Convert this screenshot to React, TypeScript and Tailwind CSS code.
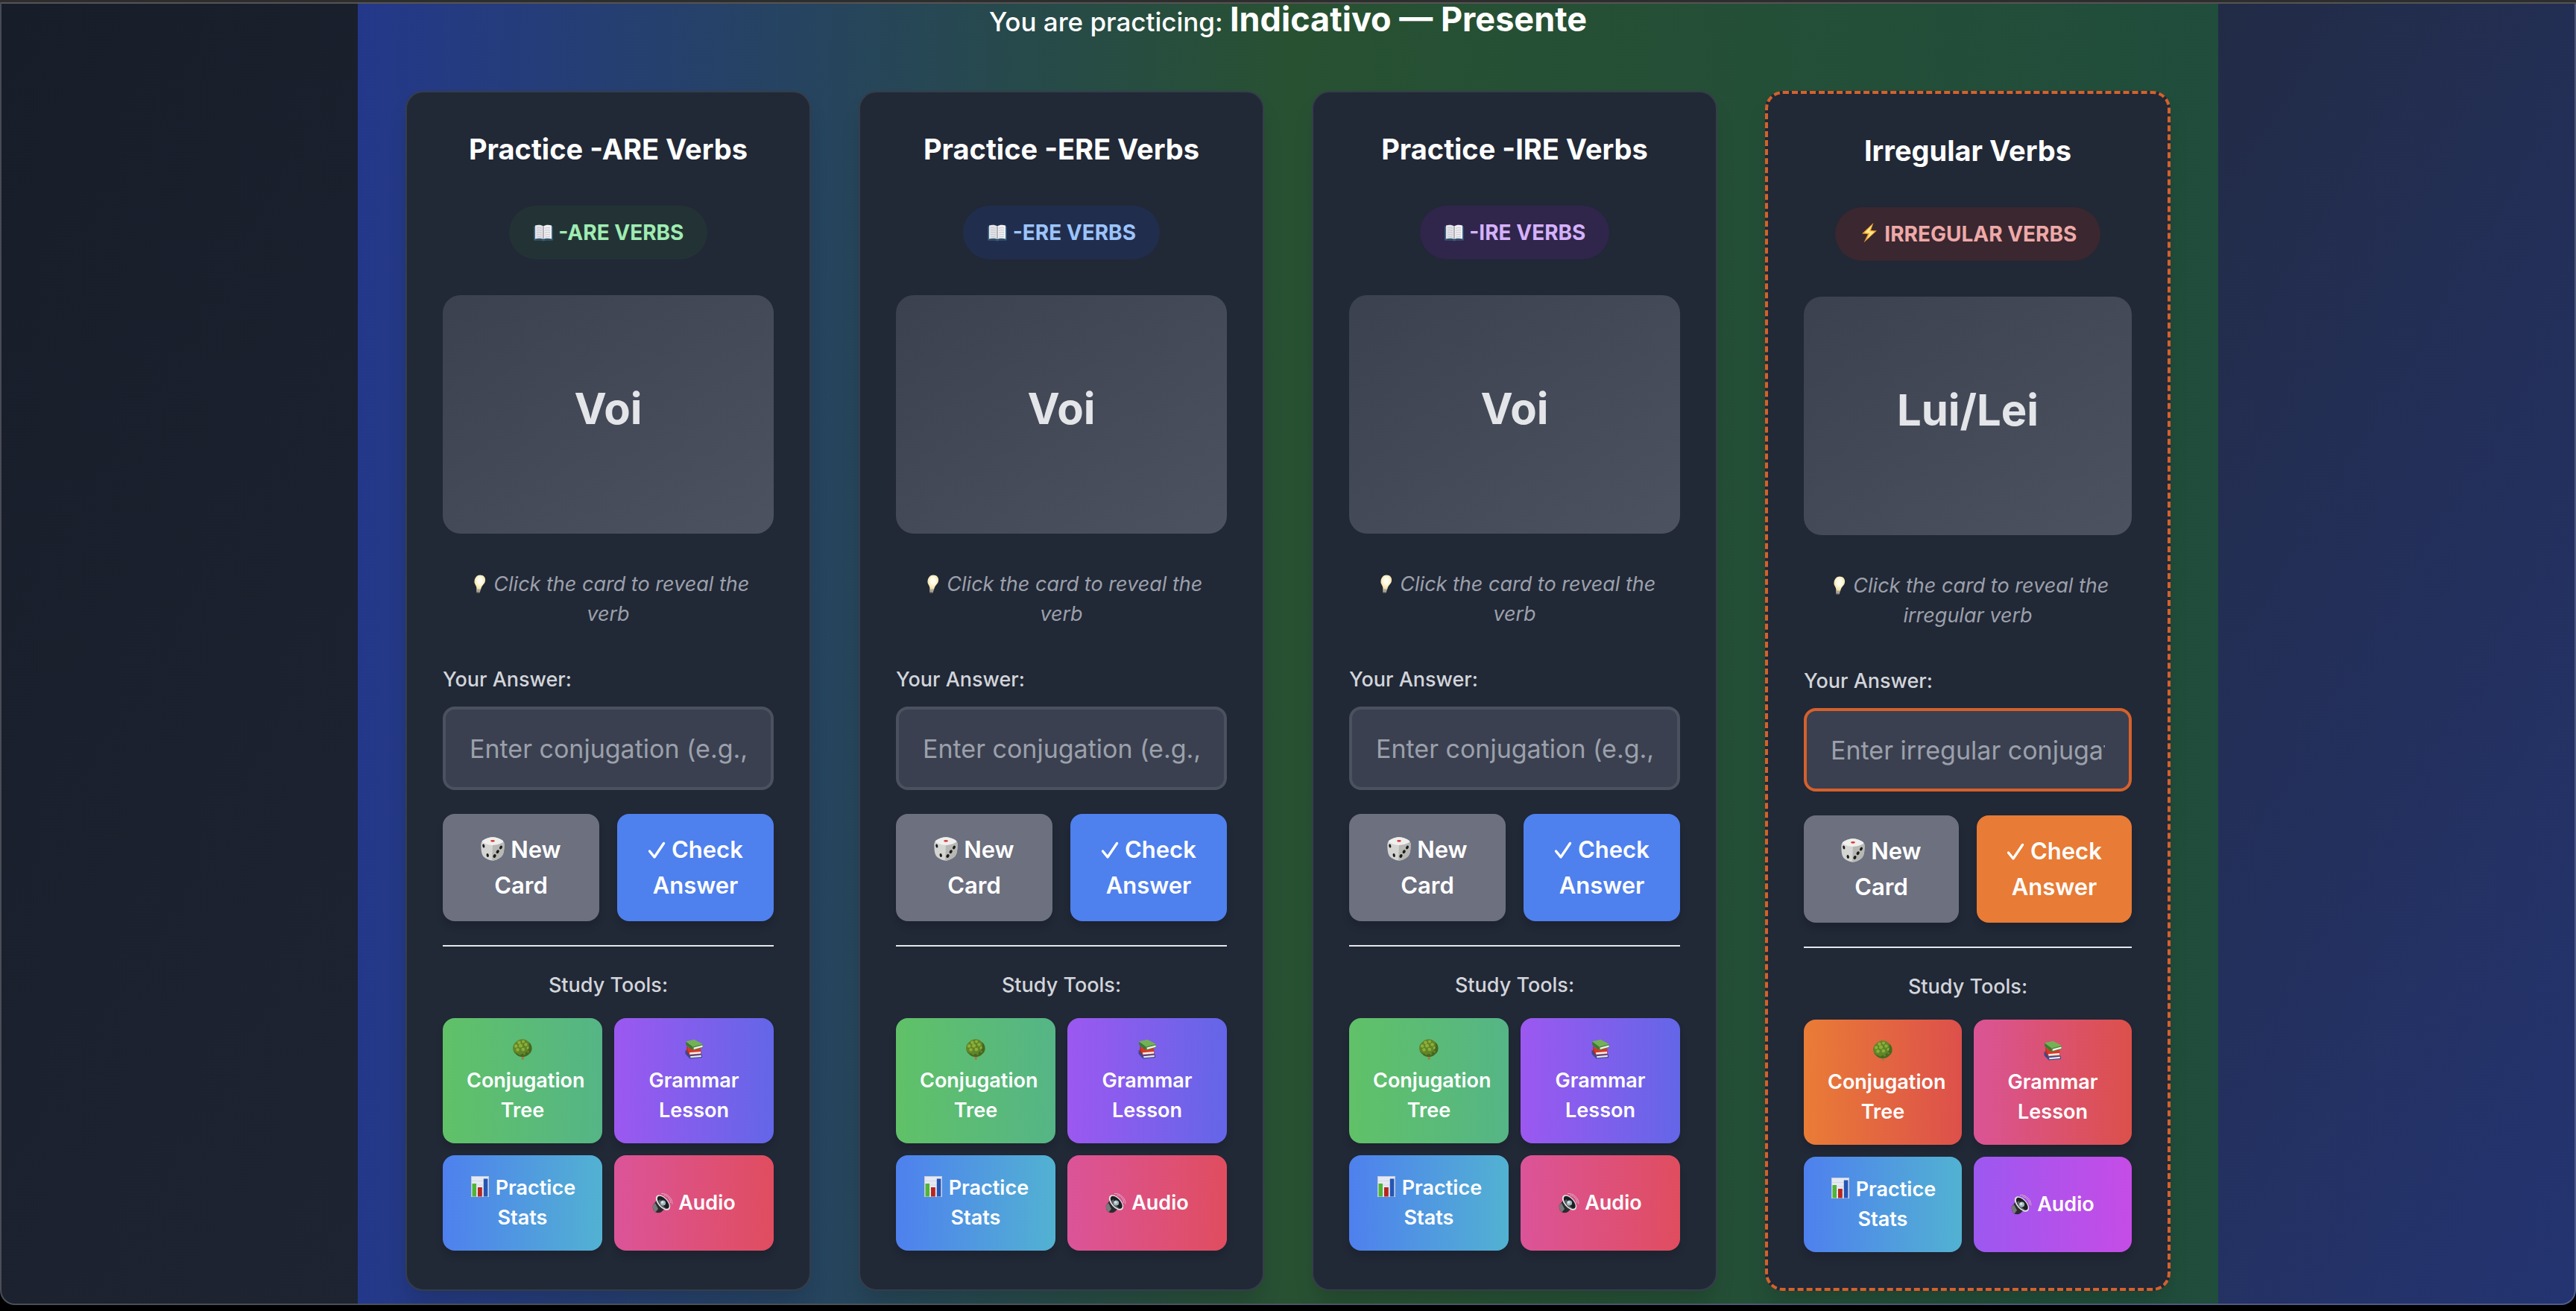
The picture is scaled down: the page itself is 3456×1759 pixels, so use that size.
import type { ReactNode } from 'react';

type IconProps = { className?: string };

function BookIcon({ className = '' }: IconProps) {
  return (
    <svg viewBox="0 0 28 28" aria-hidden="true" className={`inline-block size-7 ${className}`}>
      <path d="M1.5 5.5h25v19h-10l-2.500 1-2.500-1h-10z" fill="#3f6f8f" />
      <path d="M2.500 22.500h23v1.200h-9.500l-2 .8-2-.8h-9.500z" fill="#2a4257" />
      <path d="M3 4.500c4-1.200 8-1 11 1v17.500c-3-1.500-7-1.500-11-.5z" fill="#e3e3e8" />
      <path d="M25 4.500c-4-1.200-8-1-11 1v17.500c3-1.500 7-1.500 11-.5z" fill="#f0f0f4" />
      <path d="M14 5.500v17.500" stroke="#8d8d96" strokeWidth="1.200" />
      <path
        d="M5 8c2.500-.6 5-.5 7 .4M5 11c2.500-.6 5-.5 7 .4M5 14c2.500-.6 5-.5 7 .4M5 17c2.500-.6 5-.5 7 .4M5 20c2.500-.6 5-.5 7 .4M23 8c-2.500-.6-5-.5-7 .4M23 11c-2.500-.6-5-.5-7 .4M23 14c-2.500-.6-5-.5-7 .4M23 17c-2.500-.6-5-.5-7 .4M23 20c-2.500-.6-5-.5-7 .4"
        stroke="#b9b9c2"
        strokeWidth=".8"
        fill="none"
      />
    </svg>
  );
}

function BoltIcon({ className = '' }: IconProps) {
  return (
    <svg viewBox="0 0 28 28" aria-hidden="true" className={`inline-block size-7 ${className}`}>
      <path d="M19.500 1 4 15.500l8 .5L6.500 27.500 24 11.500l-8-.5z" fill="#f0a32f" />
      <path d="M17.500 4 7.500 14.300l7 .4-4 8.300L21 12.700l-7-.4z" fill="#ffe98a" />
    </svg>
  );
}

function BulbIcon({ className = '' }: IconProps) {
  return (
    <svg viewBox="0 0 28 28" aria-hidden="true" className={`inline-block size-7 ${className}`}>
      <defs>
        <radialGradient id="bulbGlow" cx=".5" cy=".4" r=".6">
          <stop offset=".3" stopColor="#fffdf0" />
          <stop offset="1" stopColor="#f1dc8e" />
        </radialGradient>
      </defs>
      <path
        d="M17 1.500c5 0 7.800 3.500 7 8-.6 3.800-3.500 5-5 8.500-.6 1.500-.8 2.500-1.200 3.500h-5.500c.3-1 .2-2-.1-3.500-.8-3.500-3.200-4.700-2.700-8.500.6-4.500 3.500-8 7.500-8z"
        fill="url(#bulbGlow)"
      />
      <path d="M12.200 20.500h5.800l-1.200 4.500c-1.500 1.300-3.500 1.300-4.500 0z" fill="#a8a59c" />
      <path d="M12.500 24.500h4l-1.500 1.800h-2z" fill="#4f4b42" />
    </svg>
  );
}

function DiceIcon({ className = '' }: IconProps) {
  return (
    <svg viewBox="0 0 32 32" aria-hidden="true" className={`inline-block size-8 ${className}`}>
      <path d="M2 5.500C6 2 12 .3 16 .3S26 2 30 5.500c2 2 1.600 5 1.500 8-.2 5-.8 9.500-3 12C25.500 29 19 31.700 16 31.700S5.500 29 3 25.500C1 22.500.500 18 .4 13.500c0-3-.4-6 1.600-8z" fill="#d4d4d2" />
      <path d="M2 5C6 2 12 .3 16 .3S26 2 30 5c.8 1.200-1 2.700-3 3.600-3 1.400-7.500 2.400-11 2.400S8 10 5 8.600C3 7.700 1.200 6.200 2 5z" fill="#efefed" />
      <path d="M16 11c4 0 9-1.200 12-2.800 2-1 3.500-1.700 3.600.8.2 5-.2 13-3.100 16.500C25.500 29 19 31.700 15 31.700z" fill="#b7b7b4" />
      <ellipse cx="16" cy="5.300" rx="2.900" ry="1.400" fill="#d93a36" />
      <ellipse cx="3.800" cy="12" rx="1.500" ry="2.500" fill="#1b1b1b" transform="rotate(-12 3.800 12)" />
      <ellipse cx="9.200" cy="24.500" rx="1.600" ry="2.600" fill="#1b1b1b" transform="rotate(-12 9.200 24.500)" />
      <ellipse cx="27" cy="14" rx="1.800" ry="2.600" fill="#1b1b1b" transform="rotate(28 27 14)" />
      <ellipse cx="22.700" cy="19.700" rx="1.900" ry="2.600" fill="#1b1b1b" transform="rotate(28 22.700 19.700)" />
      <ellipse cx="18.500" cy="25.500" rx="1.900" ry="2.600" fill="#1b1b1b" transform="rotate(28 18.500 25.500)" />
    </svg>
  );
}

function CheckIcon({ className = '' }: IconProps) {
  return (
    <svg viewBox="0 0 24 24" aria-hidden="true" className={`inline-block size-6 ${className}`}>
      <path d="M2.500 13 9 21 21.500 2.500" fill="none" stroke="#fff" strokeWidth="3.400" strokeLinecap="round" strokeLinejoin="round" />
    </svg>
  );
}

function TreeIcon({ className = '' }: IconProps) {
  return (
    <svg viewBox="0 0 28 28" aria-hidden="true" className={`inline-block size-7 ${className}`}>
      <path d="M12.500 22h3.500l-.4 5.800h-2.600z" fill="#a9793c" />
      <path d="M14 .3c3 0 5 1 7 2.700 3 2 5.500 5 5.500 9.500 0 3-1 5.500-3.500 7.500-2.200 2.500-5.500 4-9 4s-6.800-1.300-9-3.800C2.500 18.200 1 15.500 1 12.500c0-4 2-7 5-9C8.500 1.300 11 .3 14 .3z" fill="#5f8628" />
      <g fill="#8fae38">
        <circle cx="9.500" cy="4.800" r="2.200" />
        <circle cx="15" cy="3.400" r="2" />
        <circle cx="5.200" cy="9.500" r="2.200" />
        <circle cx="11.500" cy="9" r="2.500" />
        <circle cx="18.500" cy="7.500" r="2.200" />
        <circle cx="7.500" cy="14.500" r="2.200" />
        <circle cx="14.800" cy="14" r="2.300" />
        <circle cx="21.500" cy="12" r="1.900" />
      </g>
      <path d="M22.500 4.300c2.800 2.400 4 5 4 8.200 0 3-1 5.500-3.500 7.500-2.200 2.500-5.500 4-9 4-4 0-7-1.500-9-4-1.300-1-2.300-2-3-3.500 4 4 9 4.800 13.500 3 5.500-2 8.500-8 7-15.200z" fill="#35531b" opacity=".6" />
      <g fill="#64862c">
        <circle cx="10.500" cy="20" r="1.600" />
        <circle cx="16.500" cy="20" r="1.600" />
        <circle cx="21.500" cy="17" r="1.500" />
      </g>
    </svg>
  );
}

function BooksIcon({ className = '' }: IconProps) {
  return (
    <svg viewBox="0 0 28 28" aria-hidden="true" className={`inline-block size-7 ${className}`}>
      <path d="M2.500 14.500 8 19.500v6.500L2.500 20z" fill="#3a4a8c" />
      <path d="M6 21.500 23.500 20l1.500 1.500v3.500L8.500 26.500z" fill="#3b4c91" />
      <path d="M9 23.200 23.800 21.800v2.200L9.500 25.300z" fill="#ececec" />
      <path d="M4.500 9.500 8 14v7.500l-4-5z" fill="#b52a20" />
      <path d="M5 12 21.500 11l2 3v6.500L8 21.500z" fill="#d63a2a" />
      <path d="M8 18.200 23 17v2.600L8.500 20.800z" fill="#f4f2f0" />
      <path d="M3 3.500 12 9.500v5.500L3.500 8.500z" fill="#3c7a2c" />
      <path d="M3 3.200 14.500.8 26 7 12.500 10.500z" fill="#72b255" />
      <path d="M12.500 10.500 26 7v4.500L12.500 15.200z" fill="#4c8a3a" />
      <path d="M13.800 11.500 25.500 8.400v2.300L13.800 14z" fill="#f3f3ee" />
    </svg>
  );
}

function ChartIcon({ className = '' }: IconProps) {
  return (
    <svg viewBox="0 0 28 28" aria-hidden="true" className={`inline-block size-7 ${className}`}>
      <rect x="2" y="0" width="24" height="28" fill="#c3cbdc" />
      <rect x="3" y="1" width="22" height="26.500" fill="#e4e9f3" />
      <path d="M3 6.500h22M3 12h22M3 17.500h22M3 23h22" stroke="#ccd4e2" strokeWidth=".7" />
      <rect x="3.500" y="10" width="5.500" height="17.500" fill="#4fb437" />
      <rect x="11" y="15" width="5.800" height="12.500" fill="#b7261f" />
      <rect x="18.800" y="3.500" width="5.600" height="24" fill="#2456b4" />
    </svg>
  );
}

function SpeakerIcon({ className = '' }: IconProps) {
  return (
    <svg viewBox="0 0 28 28" aria-hidden="true" className={`inline-block size-7 ${className}`}>
      <path d="M1 17c-.8 3 .5 7.500 3.500 9.500 2.500 1.200 5.500 1 8-.5l4-4-10-12z" fill="#2b2b2d" />
      <path d="M1 17c-.8 3 .5 7.500 3.500 9.500L8 22 4 14z" fill="#77787c" />
      <ellipse cx="14.500" cy="13.500" rx="6.800" ry="12.300" transform="rotate(-42 14.500 13.500)" fill="#e2e2e4" />
      <ellipse cx="14.800" cy="13.300" rx="5.200" ry="10.500" transform="rotate(-42 14.800 13.300)" fill="#1c1f22" />
      <path d="M8 11c2 7 6 10 12 11-4-2-8-7-9-13z" fill="#5b6166" />
      <circle cx="14.500" cy="14" r="3.600" fill="#a3b6be" />
      <circle cx="13.700" cy="13.200" r="1.600" fill="#dbe7ea" />
      <path d="M12 1.500C20 .5 27.500 8 26.800 15.500M15.500 3.500c5 .5 9.500 5.500 9 10.500" stroke="#d9a9c8" strokeWidth="1" fill="none" />
    </svg>
  );
}

type Deck = {
  id: string;
  title: string;
  badge: string;
  badgeClass: string;
  badgeIcon: ReactNode;
  pronoun: string;
  hint: string;
  placeholder: string;
  cardClass: string;
  inputClass: string;
  checkClass: string;
  treeClass: string;
  lessonClass: string;
  audioClass: string;
};

const regular = {
  badgeIcon: <BookIcon className="-mt-1" />,
  pronoun: 'Voi',
  hint: 'Click the card to reveal the verb',
  cardClass: 'border-2 border-[#363d4a]',
  inputClass: 'border-[#4b515f]',
  checkClass: 'bg-[#4e80ee]',
  treeClass: 'from-[#60c168] to-[#55b586]',
  lessonClass: 'from-[#9c58f0] to-[#6366e8]',
  audioClass: 'from-[#db5499] to-[#e04d5f]',
};

const decks: Deck[] = [
  {
    ...regular,
    id: 'are',
    title: 'Practice -ARE Verbs',
    badge: '-ARE VERBS',
    badgeClass: 'bg-[#233335] text-[#9fecb2]',
    placeholder: 'Enter conjugation (e.g., parlo)',
  },
  {
    ...regular,
    id: 'ere',
    title: 'Practice -ERE Verbs',
    badge: '-ERE VERBS',
    badgeClass: 'bg-[#212d4d] text-[#9cc4fb]',
    placeholder: 'Enter conjugation (e.g., credo)',
  },
  {
    ...regular,
    id: 'ire',
    title: 'Practice -IRE Verbs',
    badge: '-IRE VERBS',
    badgeClass: 'bg-[#30254b] text-[#d4b2fa]',
    placeholder: 'Enter conjugation (e.g., dormo)',
  },
  {
    id: 'irregular',
    title: 'Irregular Verbs',
    badge: 'IRREGULAR VERBS',
    badgeClass: 'bg-[#3a272f] text-[#eea9a8]',
    badgeIcon: <BoltIcon className="-mt-2" />,
    pronoun: 'Lui/Lei',
    hint: 'Click the card to reveal the irregular verb',
    placeholder: 'Enter irregular conjugation',
    cardClass: 'border-4 border-dashed border-[#d6602b]',
    inputClass: 'border-[#d6602b]',
    checkClass: 'bg-[#e87b35]',
    treeClass: 'from-[#e97c36] to-[#dd504b]',
    lessonClass: 'from-[#da5496] to-[#dc504a]',
    audioClass: 'from-[#9c58f0] to-[#c64ce6]',
  },
];

function ActionButton({ className, children }: { className: string; children: ReactNode }) {
  return (
    <button
      type="button"
      className={`min-w-0 flex-1 rounded-2xl px-8 py-6 text-[31px] leading-[48px] font-semibold shadow-[0_8px_12px_-2px_rgba(0,0,0,0.15)] ${className}`}
    >
      {children}
    </button>
  );
}

function ToolButton({ className, children }: { className: string; children: ReactNode }) {
  return (
    <button
      type="button"
      className={`min-w-0 rounded-2xl bg-linear-to-r/srgb px-8 py-6 text-[27px] leading-10 font-semibold shadow-[0_8px_12px_-2px_rgba(0,0,0,0.15)] ${className}`}
    >
      {children}
    </button>
  );
}

function PracticeCard({ deck }: { deck: Deck }) {
  return (
    <section className={`rounded-3xl bg-[#212836] p-12 shadow-[0_20px_30px_-6px_rgba(0,0,0,0.15)] ${deck.cardClass}`}>
      <h2 className="mb-12 text-center text-[38px] leading-[56px] font-bold">{deck.title}</h2>
      <div className="mb-12 flex justify-center">
        <span className={`rounded-full px-8 py-4 text-[28px] leading-10 font-bold whitespace-nowrap ${deck.badgeClass}`}>
          {deck.badgeIcon} {deck.badge}
        </span>
      </div>
      <button
        type="button"
        className="mb-12 flex h-80 w-full items-center justify-center rounded-3xl bg-linear-to-br/srgb from-[#3b414f] to-[#4d5260] pb-4 text-[58px] font-bold text-[#e3e5e9]"
      >
        {deck.pronoun}
      </button>
      <p className="mb-12 px-4 text-center text-[27px] leading-10 text-[#9ca0ab] italic">
        <BulbIcon className="-mt-1" /> {deck.hint}
      </p>
      <label htmlFor={`answer-${deck.id}`} className="mb-4 block text-[27px] leading-10 font-medium text-[#d2d5da]">
        Your Answer:
      </label>
      <input
        id={`answer-${deck.id}`}
        type="text"
        placeholder={deck.placeholder}
        className={`mb-8 block h-28 w-full rounded-2xl border-4 bg-[#3a4050] px-8 text-[34px] text-white placeholder:text-[#9ca0ab] ${deck.inputClass}`}
      />
      <div className="mb-8 flex gap-6">
        <ActionButton className="bg-[#6c707f]">
          <DiceIcon className="-mt-2" /> New Card
        </ActionButton>
        <ActionButton className={deck.checkClass}>
          <CheckIcon className="-mt-1" /> Check Answer
        </ActionButton>
      </div>
      <div className="border-t-2 border-[#e5e7eb] pt-8">
        <h3 className="mb-6 text-center text-[27px] leading-10 font-medium text-[#d2d5da]">Study Tools:</h3>
        <div className="grid grid-cols-2 gap-4">
          <ToolButton className={deck.treeClass}>
            <TreeIcon className="-mt-2" /> Conjugation Tree
          </ToolButton>
          <ToolButton className={deck.lessonClass}>
            <BooksIcon className="-mt-2" /> Grammar Lesson
          </ToolButton>
          <ToolButton className="from-[#4e80ee] to-[#52b2d2]">
            <ChartIcon className="-mt-2" /> Practice Stats
          </ToolButton>
          <ToolButton className={deck.audioClass}>
            <SpeakerIcon className="-mt-1" /> Audio
          </ToolButton>
        </div>
      </div>
    </section>
  );
}

export default function App() {
  return (
    <div className="flex min-h-screen flex-col bg-black pb-2 font-[Inter,sans-serif] text-white">
      <div className="h-[3px] bg-[#2d2d2d]" />
      <div className="relative flex flex-1 flex-col rounded-b-[20px] bg-[linear-gradient(121deg,#181d2a_0%,#212835_53%,#243471_100%)] pt-0.5 pb-0.5">
        <main className="mx-auto w-full max-w-[2496px] flex-1 bg-linear-to-r/srgb from-[#24388a] via-[#285132] to-[#204d3c] px-16 pb-4">
          <h1 className="mb-[72px] text-center text-[35px] leading-[42px] font-medium">
            You are practicing: <strong className="text-[45px] font-bold">Indicativo — Presente</strong>
          </h1>
          <div className="grid grid-cols-1 gap-16 md:grid-cols-2 xl:grid-cols-4">
            {decks.map((deck) => (
              <PracticeCard key={deck.id} deck={deck} />
            ))}
          </div>
        </main>
        <div className="pointer-events-none absolute inset-0 rounded-b-[20px] border-2 border-white/20 border-t-[#545454]" />
      </div>
    </div>
  );
}
